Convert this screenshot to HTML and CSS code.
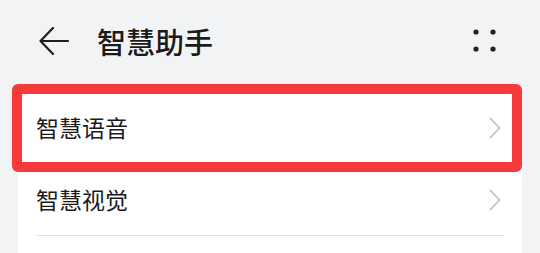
FILE: index.html
```html
<!DOCTYPE html>
<html lang="zh">
<head>
<meta charset="utf-8">
<link rel="stylesheet" href="styles.css">
</head>
<body>
<div class="page">
  <header class="header">
    <svg class="back" width="30" height="28" viewBox="0 0 30 28">
      <path d="M29 14H1.5M14 1L1.5 14L14 27" fill="none" stroke="#1f1f1f" stroke-width="2.2" stroke-linecap="round" stroke-linejoin="round"/>
    </svg>
    <h1 class="title">智慧助手</h1>
    <svg class="more" width="24" height="24" viewBox="0 0 24 24">
      <circle cx="3" cy="3" r="2.6" fill="#222"/>
      <circle cx="20" cy="3" r="2.6" fill="#222"/>
      <circle cx="3" cy="20" r="2.6" fill="#222"/>
      <circle cx="20" cy="20" r="2.6" fill="#222"/>
    </svg>
  </header>
  <section class="card">
    <div class="row">
      <span class="label">智慧语音</span>
      <svg class="chev" width="12" height="22" viewBox="0 0 12 22"><path d="M1.5 1.5L10.5 11L1.5 20.5" fill="none" stroke="#c4c4c4" stroke-width="1.8" stroke-linecap="round" stroke-linejoin="round"/></svg>
    </div>
    <div class="divider"></div>
    <div class="row">
      <span class="label">智慧视觉</span>
      <svg class="chev" width="12" height="22" viewBox="0 0 12 22"><path d="M1.5 1.5L10.5 11L1.5 20.5" fill="none" stroke="#c4c4c4" stroke-width="1.8" stroke-linecap="round" stroke-linejoin="round"/></svg>
    </div>
    <div class="divider"></div>
    <div class="row">
      <span class="label"></span>
    </div>
  </section>
  <div class="highlight"></div>
</div>
</body>
</html>
```
FILE: styles.css
```css
html, body {
  margin: 0;
  padding: 0;
  background: #f2f3f5;
  font-family: "Noto Sans CJK SC", "Noto Sans", sans-serif;
  color: #1b1b1b;
  overflow: hidden;
}
.page {
  position: relative;
  width: 540px;
  height: 253px;
  overflow: hidden;
}
.header {
  height: 92px;
  box-sizing: border-box;
  display: flex;
  align-items: center;
  padding: 0 0 10px 39px;
}
.back {
  flex: none;
}
.title {
  margin: 0 0 0 28px;
  font-size: 29px;
  font-weight: 500;
  line-height: 1;
  flex: 1;
}
.more {
  flex: none;
  margin-right: 43px;
}
.card {
  margin: 0 18px;
  background: #fff;
  border-radius: 20px 20px 0 0;
  padding-bottom: 40px;
}
.row {
  height: 71px;
  display: flex;
  align-items: center;
  justify-content: space-between;
  padding: 0 21px 0 18px;
}
.label {
  font-size: 23px;
  line-height: 1;
}
.chev {
  flex: none;
}
.divider {
  height: 1px;
  background: #e2e2e2;
  margin: 0 18px;
}
.highlight {
  position: absolute;
  left: 12px;
  top: 84px;
  width: 510px;
  height: 88px;
  box-sizing: border-box;
  border: 10px solid #f63a3b;
  border-radius: 6px;
}
```
